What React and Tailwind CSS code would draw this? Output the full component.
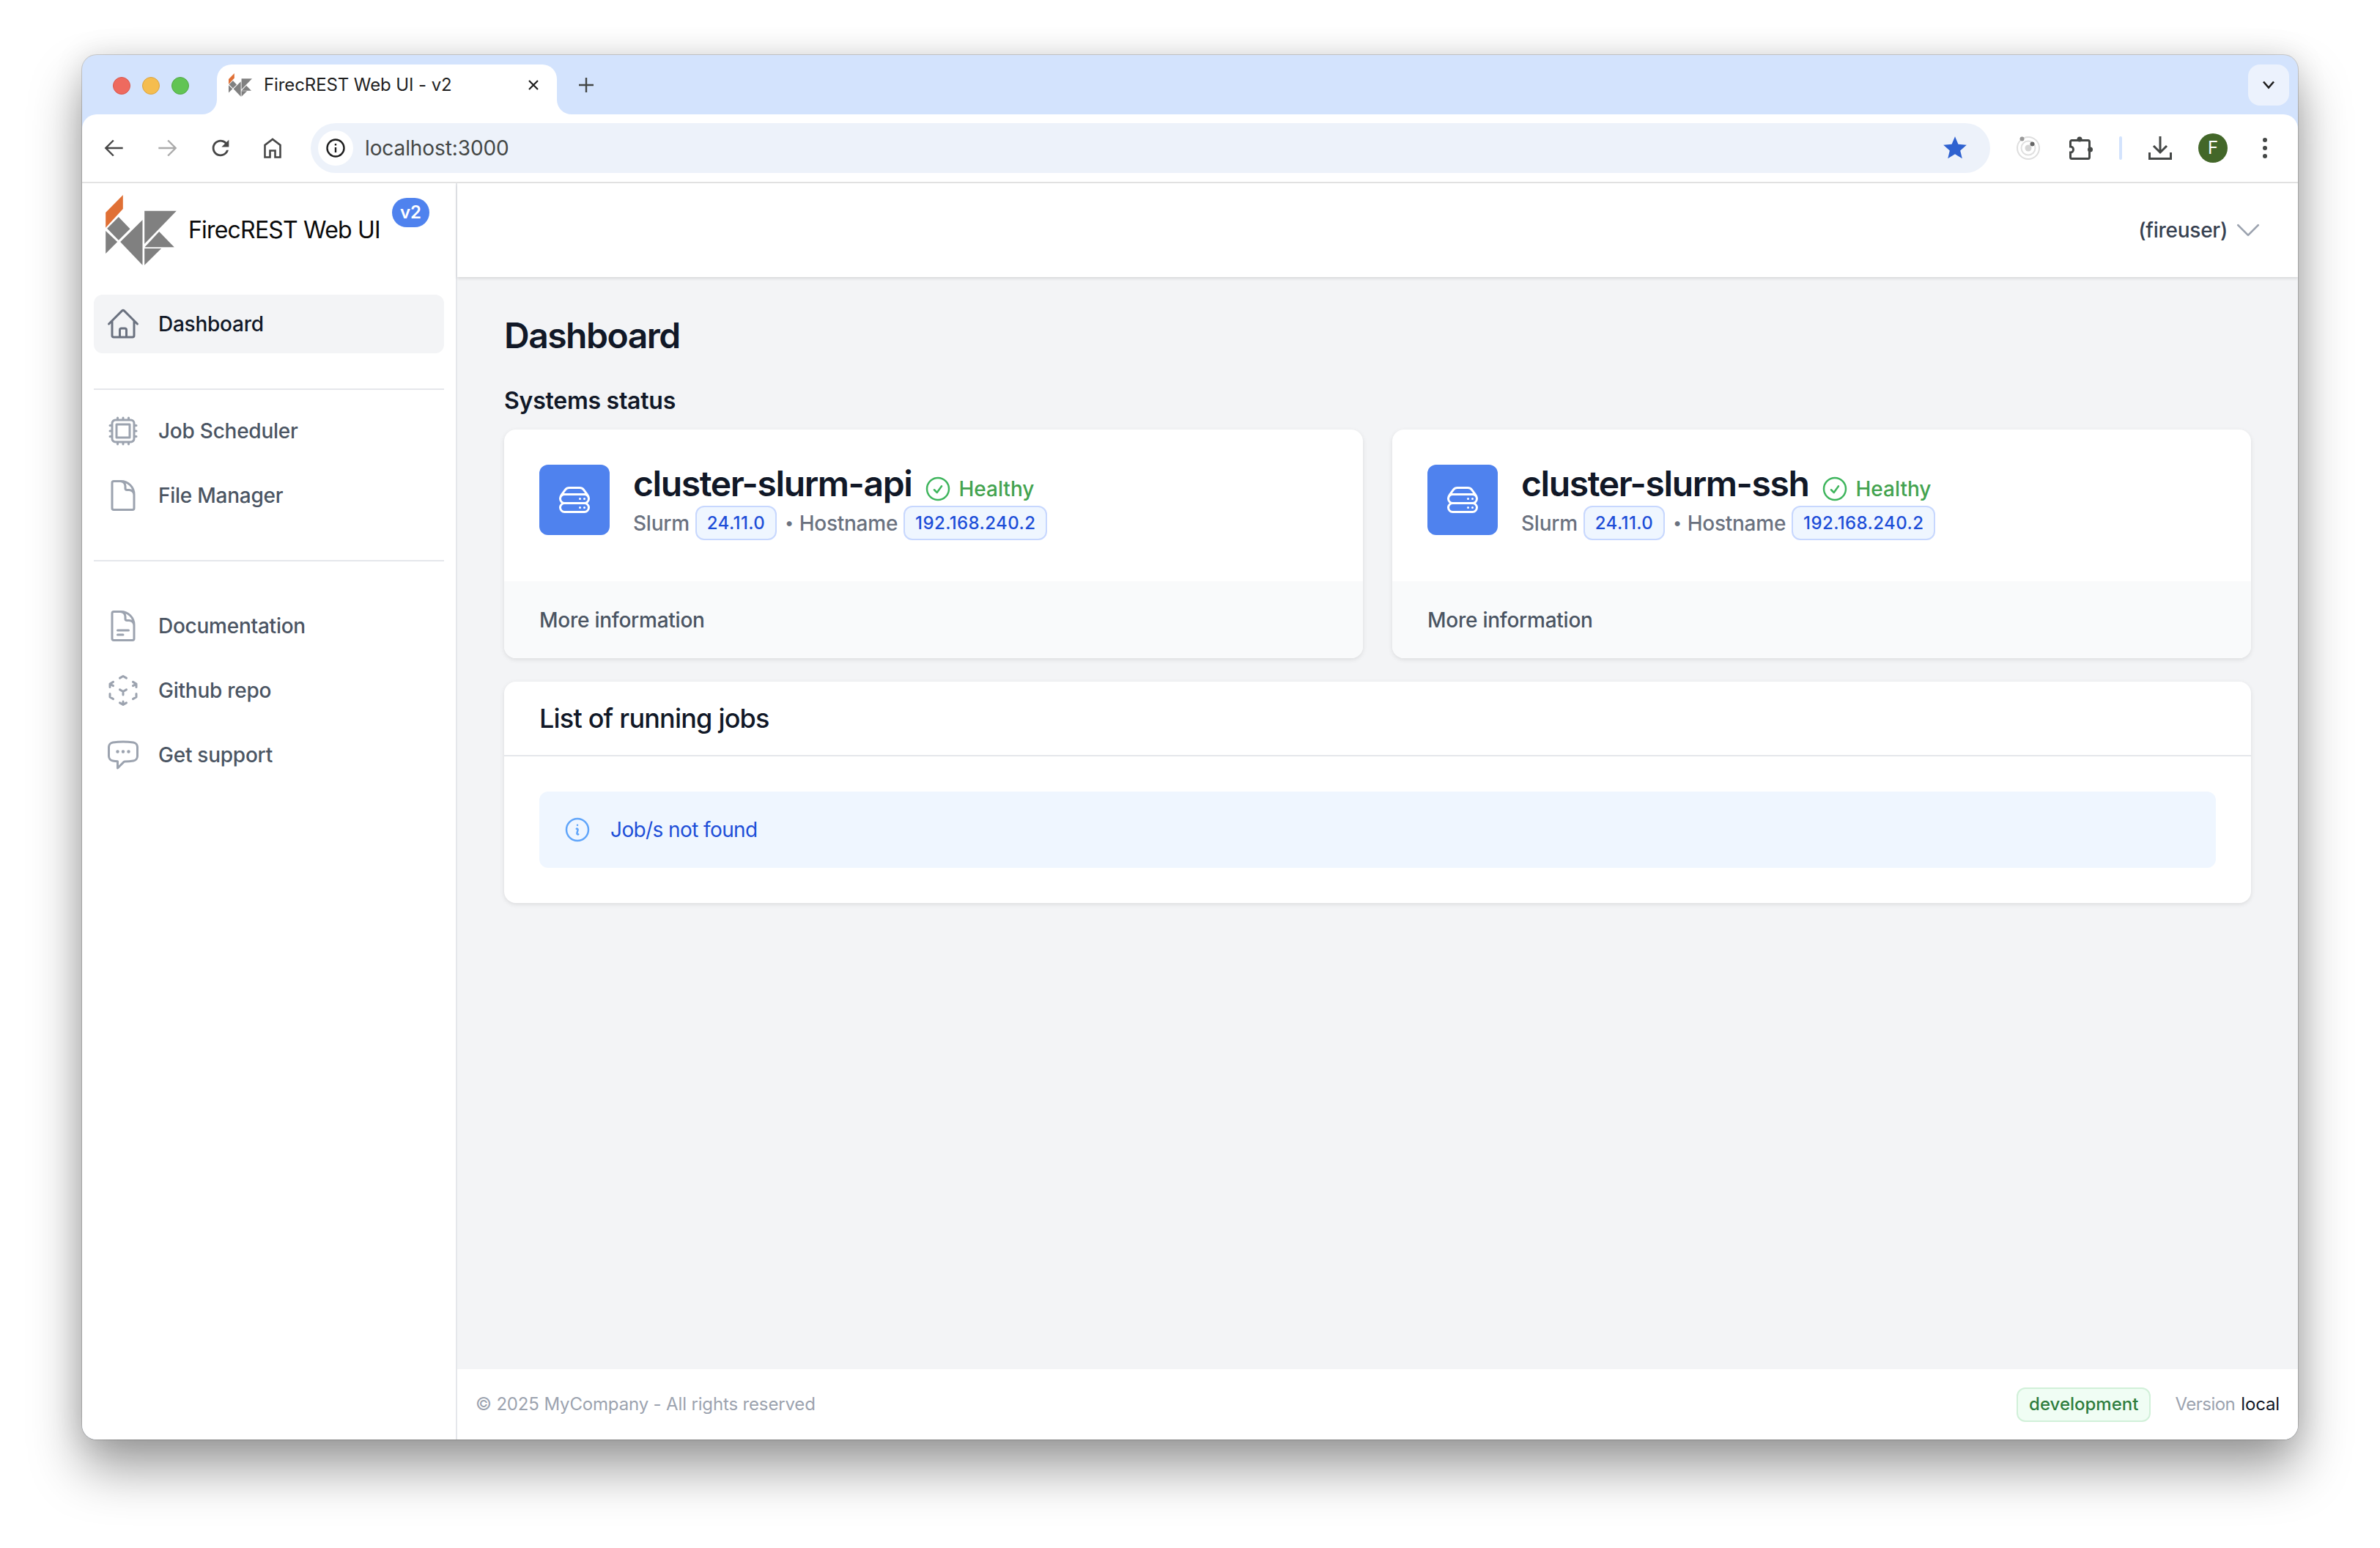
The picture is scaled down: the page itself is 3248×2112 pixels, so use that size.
import {
  HiOutlineHome,
  HiOutlineCpuChip,
  HiOutlineDocument,
  HiOutlineDocumentText,
  HiOutlineCubeTransparent,
  HiOutlineChatBubbleLeftEllipsis,
  HiOutlineServerStack,
  HiOutlineCheckCircle,
  HiOutlineInformationCircle,
  HiOutlineChevronDown,
} from "react-icons/hi2";

function Logo({ className }) {
  return (
    <svg viewBox="72 48 290 288" className={className}>
      <polygon points="72,120 143,48 143,105 72,182" fill="#e07035" />
      <g fill="#808080">
        <polygon points="125,138 172,187 125,233 78,185" />
        <polygon points="72,195 120,240 72,288" />
        <polygon points="223,150 223,335 132,240" />
        <polygon points="231,113 362,113 231,248" />
        <polygon points="291,198 353,262 232,262" />
        <polygon points="231,267 300,267 231,335" />
      </g>
    </svg>
  );
}

function TabStrip() {
  return (
    <div className="flex h-[81px] items-start pl-[42px] pr-[12px]">
      <div className="mt-[30px] flex gap-[16px]">
        <span className="h-[24px] w-[24px] rounded-full border border-[#d9574c] bg-[#ee6a5f]" />
        <span className="h-[24px] w-[24px] rounded-full border border-[#d9a441] bg-[#f5bd4f]" />
        <span className="h-[24px] w-[24px] rounded-full border border-[#52a847] bg-[#61c454]" />
      </div>
      <div className="relative ml-[38px] mt-[13px] flex h-[68px] w-[464px] items-start rounded-t-[20px] bg-white pl-[16px] pr-[24px] pt-[12px]">
        <svg viewBox="0 0 20 20" className="absolute bottom-0 left-[-20px] h-[20px] w-[20px]">
          <path d="M20 0V20H0A20 20 0 0 0 20 0Z" fill="#fff" />
        </svg>
        <svg viewBox="0 0 20 20" className="absolute bottom-0 right-[-20px] h-[20px] w-[20px]">
          <path d="M0 0V20H20A20 20 0 0 1 0 0Z" fill="#fff" />
        </svg>
        <Logo className="h-[32px] w-[32px]" />
        <span className="ml-[16px] mt-[1px] text-[24px] leading-[30px] tracking-[-0.1px] text-[#1f1f1f]">
          FirecREST Web UI - v2
        </span>
        <svg viewBox="0 0 16 16" className="ml-auto mt-[8px] h-[16px] w-[16px]" fill="none" stroke="#1f1f1f" strokeWidth="2.2">
          <path d="M2 2l12 12M14 2L2 14" />
        </svg>
      </div>
      <svg viewBox="0 0 20 20" className="ml-[30px] mt-[31px] h-[20px] w-[20px]" fill="none" stroke="#444746" strokeWidth="2.4">
        <path d="M10 0v20M0 10h20" />
      </svg>
      <div className="ml-auto mt-[13px] flex h-[56px] w-[56px] items-center justify-center rounded-[16px] bg-[#ecf2fd]">
        <svg viewBox="0 0 16 12" className="h-[12px] w-[16px]" fill="none" stroke="#1f1f1f" strokeWidth="2.6">
          <path d="M1 1.5l7 8 7-8" />
        </svg>
      </div>
    </div>
  );
}

function Toolbar() {
  return (
    <div className="flex h-[94px] items-center rounded-t-[20px] border-b-2 border-[#e3e3e3] bg-white tracking-normal">
      <svg viewBox="0 0 24 24" className="ml-[30px] h-[28px] w-[28px]" fill="none" stroke="#474747" strokeWidth="2.1">
        <path d="M22 12H3M11 3l-9 9 9 9" />
      </svg>
      <svg viewBox="0 0 24 24" className="ml-[44px] h-[28px] w-[28px]" fill="none" stroke="#ababab" strokeWidth="2.1">
        <path d="M2 12h19M13 3l9 9-9 9" />
      </svg>
      <svg viewBox="0 0 24 24" className="ml-[42px] h-[34px] w-[34px]" fill="#474747">
        <path d="M17.65 6.35A7.958 7.958 0 0 0 12 4c-4.42 0-7.99 3.58-7.99 8s3.57 8 7.99 8c3.73 0 6.84-2.55 7.73-6h-2.08A5.99 5.99 0 0 1 12 18c-3.31 0-6-2.69-6-6s2.69-6 6-6c1.66 0 3.14.69 4.22 1.78L13 11h7V4l-2.35 2.35z" />
      </svg>
      <svg viewBox="0 0 24 28" className="ml-[42px] h-[28px] w-[24px]" fill="none" stroke="#474747" strokeWidth="2.6">
        <path d="M1.5 26.5V10L12 2l10.5 8v16.5H15.5v-9h-7v9z" />
      </svg>
      <div className="ml-[40px] flex h-[68px] w-[2292px] items-center rounded-full bg-[#edf2fa] pl-[10px] pr-[29px]">
        <div className="flex h-[48px] w-[48px] items-center justify-center rounded-full bg-white">
          <svg viewBox="0 0 26 26" className="h-[26px] w-[26px]" fill="none" stroke="#1f1f1f" strokeWidth="2.4">
            <circle cx="13" cy="13" r="11.5" />
            <path d="M13 12v7M13 7v2.6" />
          </svg>
        </div>
        <span className="ml-[16px] text-[28px] tracking-[-0.1px] text-[#444746]">localhost:3000</span>
        <svg viewBox="0 0 24 24" className="ml-auto h-[38px] w-[38px]" fill="#2f62d0">
          <path d="M12 17.27L18.18 21l-1.64-6.81L22 9.24l-7.19-.61L12 2 9.19 8.63 2 9.24l5.46 4.95L5.82 21z" />
        </svg>
      </div>
      <svg viewBox="0 0 36 36" className="ml-[34px] h-[36px] w-[36px]" fill="none">
        <circle cx="18" cy="18" r="15" stroke="#dedede" strokeWidth="2" />
        <circle cx="18" cy="18" r="9.5" stroke="#e0e0e0" strokeWidth="2" />
        <circle cx="18" cy="18" r="4.5" fill="#d5d5d5" />
        <circle cx="9.5" cy="5.5" r="3" fill="#999999" />
        <circle cx="23.5" cy="12.5" r="3" fill="#666666" />
      </svg>
      <svg viewBox="0 0 32 32" className="ml-[38px] h-[32px] w-[32px]" fill="none" stroke="#444746" strokeWidth="3">
        <path d="M3.5 5.5H25.5a2 2 0 0 1 2 2V28.5a2 2 0 0 1-2 2H3.5a2 2 0 0 1-2-2V22a4 4 0 0 0 0-8V7.5a2 2 0 0 1 2-2z" />
        <circle cx="14" cy="4" r="3.5" fill="#444746" stroke="none" />
        <circle cx="28.5" cy="18" r="3.5" fill="#444746" stroke="none" />
      </svg>
      <span className="ml-[36px] h-[32px] w-[4px] rounded-full bg-[#d3e3fd]" />
      <svg viewBox="0 0 32 32" className="ml-[36px] h-[32px] w-[32px]" fill="none" stroke="#444746" strokeWidth="3">
        <path d="M16 0v22M7 13l9 9 9-9" />
        <path d="M1.5 22v8.5h29V22" />
      </svg>
      <div className="ml-[36px] flex h-[40px] w-[40px] items-center justify-center rounded-full bg-[#436729] text-[24px] text-white">
        F
      </div>
      <div className="ml-[48px] flex flex-col gap-[5px]">
        <span className="h-[6px] w-[6px] rounded-full bg-[#444746]" />
        <span className="h-[6px] w-[6px] rounded-full bg-[#444746]" />
        <span className="h-[6px] w-[6px] rounded-full bg-[#444746]" />
      </div>
    </div>
  );
}

function NavItem({ icon: Icon, label, active }) {
  return (
    <a
      className={
        active
          ? "flex h-[80px] items-center rounded-[12px] bg-[#f3f4f6] px-[16px] text-[28px] font-medium text-[#111827]"
          : "flex h-[80px] items-center rounded-[12px] px-[16px] text-[28px] font-medium text-[#4b5563]"
      }
    >
      <Icon size={48} className={active ? "mr-[24px] text-[#6b7280]" : "mr-[24px] text-[#9ca3af]"} />
      {label}
    </a>
  );
}

function Sidebar() {
  return (
    <aside className="flex w-[512px] shrink-0 flex-col border-r-2 border-[#e5e7eb] bg-white px-[16px]">
      <div className="flex h-[152px] items-start pl-[16px] pt-[16px]">
        <Logo className="h-[96px] w-[97px] shrink-0" />
        <span className="ml-[16px] mt-[24px] whitespace-nowrap text-[32px] leading-[48px] tracking-[-0.8px] text-[#0b0b0b]">
          FirecREST Web UI
        </span>
        <span className="ml-[16px] mt-[4px] flex h-[40px] w-[51px] shrink-0 items-center justify-center rounded-full bg-[#4f82ee] text-[24px] font-semibold text-white">
          v2
        </span>
      </div>
      <NavItem icon={HiOutlineHome} label="Dashboard" active />
      <div className="mt-[48px] h-[2px] bg-[#e5e7eb]" />
      <div className="mt-[16px] flex flex-col gap-[8px]">
        <NavItem icon={HiOutlineCpuChip} label="Job Scheduler" />
        <NavItem icon={HiOutlineDocument} label="File Manager" />
      </div>
      <div className="mt-[48px] h-[2px] bg-[#e5e7eb]" />
      <div className="mt-[48px] flex flex-col gap-[8px]">
        <NavItem icon={HiOutlineDocumentText} label="Documentation" />
        <NavItem icon={HiOutlineCubeTransparent} label="Github repo" />
        <NavItem icon={HiOutlineChatBubbleLeftEllipsis} label="Get support" />
      </div>
    </aside>
  );
}

function Tag({ children }) {
  return (
    <span className="flex h-[47px] items-center rounded-[12px] border-2 border-[#c7d7fe] bg-[#eff6ff] px-[14px] text-[24px] font-medium tracking-[0.4px] text-[#1d4ed8]">
      {children}
    </span>
  );
}

function SystemCard({ name }) {
  return (
    <div className="overflow-hidden rounded-[16px] bg-white shadow-[0_2px_6px_rgba(0,0,0,0.1)]">
      <div className="flex h-[207px] items-start px-[48px] pt-[48px]">
        <div className="flex h-[96px] w-[96px] items-center justify-center rounded-[12px] bg-[#4f82ee]">
          <HiOutlineServerStack size={48} className="text-white" />
        </div>
        <div className="ml-[32px]">
          <div className="flex h-[56px] items-center">
            <span className="mb-[4px] text-[48px] font-semibold leading-[52px] tracking-[-1.4px] text-[#111827]">
              {name}
            </span>
            <HiOutlineCheckCircle size={40} className="ml-[16px] mt-[10px] text-[#3fb55d]" />
            <span className="ml-[8px] mt-[10px] text-[28px] font-medium tracking-normal text-[#43a34f]">Healthy</span>
          </div>
          <div className="flex items-center text-[28px] font-medium text-[#6b7280]">
            Slurm
            <span className="ml-[8px]">
              <Tag>24.11.0</Tag>
            </span>
            <span className="ml-[11px] text-[22px]">•</span>
            <span className="ml-[8px]">Hostname</span>
            <span className="ml-[8px]">
              <Tag>192.168.240.2</Tag>
            </span>
          </div>
        </div>
      </div>
      <div className="flex h-[105px] items-center bg-[#f9fafb] px-[48px] text-[28px] font-medium text-[#4b5563]">
        More information
      </div>
    </div>
  );
}

function Main() {
  return (
    <main className="flex min-w-0 flex-1 flex-col bg-[#f3f4f6]">
      <header className="flex h-[128px] shrink-0 items-center justify-end bg-white pr-[46px] text-[28px] font-medium text-[#374151] shadow-[0_2px_4px_rgba(0,0,0,0.12)]">
        (fireuser)
        <HiOutlineChevronDown size={44} className="ml-[6px] text-[#9ca3af]" />
      </header>
      <div className="flex-1 px-[64px] pt-[48px]">
        <h1 className="text-[48px] font-semibold leading-[64px] tracking-[-1.5px] text-[#111827]">Dashboard</h1>
        <h2 className="mt-[33px] text-[32px] font-semibold leading-[48px] text-[#111827]">Systems status</h2>
        <div className="mt-[15px] grid grid-cols-2 gap-[40px]">
          <SystemCard name="cluster-slurm-api" />
          <SystemCard name="cluster-slurm-ssh" />
        </div>
        <div className="mt-[32px] rounded-[16px] bg-white shadow-[0_2px_6px_rgba(0,0,0,0.1)]">
          <div className="flex h-[102px] items-center border-b-2 border-[#e5e7eb] px-[48px] text-[36px] font-medium tracking-[-0.8px] text-[#111827]">
            List of running jobs
          </div>
          <div className="p-[48px]">
            <div className="flex h-[104px] items-center rounded-[12px] bg-[#eff6ff] px-[32px] text-[28px] font-normal tracking-[-0.6px] text-[#1d4ed8]">
              <HiOutlineInformationCircle size={40} className="text-[#60a5fa]" />
              <span className="ml-[25px]">Job/s not found</span>
            </div>
          </div>
        </div>
      </div>
      <footer className="flex h-[96px] shrink-0 items-center justify-between bg-white pl-[25px] pr-[25px] text-[24px] tracking-[-0.15px] text-[#9ca3af]">
        <span>© 2025 MyCompany - All rights reserved</span>
        <div className="flex items-center">
          <span className="flex h-[47px] items-center rounded-[12px] border-2 border-[#d1f0d9] bg-[#f0fdf4] px-[15px] font-medium tracking-normal text-[#2e7d3e]">
            development
          </span>
          <span className="ml-[33px] tracking-[-0.5px]">Version</span>
          <span className="ml-[8px] text-[#111827]">local</span>
        </div>
      </footer>
    </main>
  );
}

export default function App() {
  return (
    <div className="h-[2112px] w-[3248px] overflow-hidden bg-white pl-[112px] pt-[75px] font-['Inter',sans-serif] tracking-[-0.25px]">
      <div className="flex h-[1889px] w-[3024px] flex-col overflow-hidden rounded-[20px] bg-[#d3e3fd] shadow-[0_0_0_1px_rgba(0,0,0,0.16),0_40px_70px_rgba(0,0,0,0.38),0_0_40px_rgba(0,0,0,0.12)]">
        <TabStrip />
        <Toolbar />
        <div className="flex min-h-0 flex-1">
          <Sidebar />
          <Main />
        </div>
      </div>
    </div>
  );
}
